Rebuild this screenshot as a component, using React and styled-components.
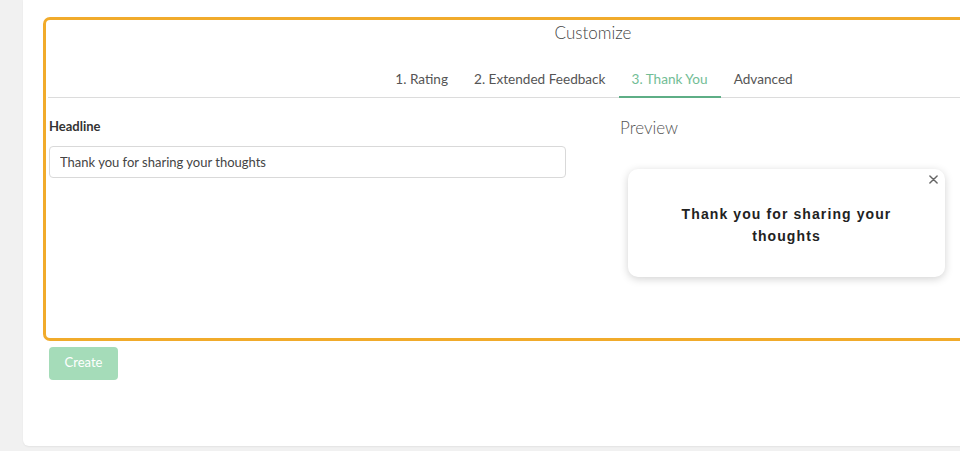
import React from 'react';
import styled, { createGlobalStyle } from 'styled-components';

const Global = createGlobalStyle`
	html, body {
		margin: 0;
		padding: 0;
		background: #f1f1f1;
	}
	#root {
		width: 960px;
		height: 451px;
		overflow: hidden;
	}
`;

const tabs = ['1. Rating', '2. Extended Feedback', '3. Thank You', 'Advanced'];

const App = () => {
	return (
		<Page>
			<Global />
			<Card>
				<Editor>
					<Heading>Customize</Heading>
					<TabBar>
						{tabs.map((t, i) => (
							<Tab key={t} $active={i === 2}>
								{t}
							</Tab>
						))}
					</TabBar>
					<Columns>
						<Left>
							<Label>Headline</Label>
							<Input defaultValue="Thank you for sharing your thoughts" />
						</Left>
						<Right>
							<PreviewTitle>Preview</PreviewTitle>
							<PreviewCard>
								<Close>
									<svg viewBox="0 0 10 10" width="9" height="9">
										<path
											d="M1 1 L9 9 M9 1 L1 9"
											stroke="#666"
											strokeWidth="1.6"
											strokeLinecap="round"
										/>
									</svg>
								</Close>
								<PreviewText>Thank you for sharing your thoughts</PreviewText>
							</PreviewCard>
						</Right>
					</Columns>
				</Editor>
				<CreateButton>Create</CreateButton>
			</Card>
		</Page>
	);
};

export default App;

const Page = styled.div`
	padding-left: 23px;
	height: 451px;
	box-sizing: border-box;
	font-family: Lato, 'Open Sans', sans-serif;
`;

const Card = styled.div`
	background: #ffffff;
	width: 1200px;
	height: 446px;
	border-radius: 0 0 0 6px;
	box-shadow: 0 1px 2px rgba(0, 0, 0, 0.06);
	padding: 17px 0 0 20px;
	box-sizing: border-box;
`;

const Editor = styled.div`
	width: 1100px;
	height: 324px;
	box-sizing: border-box;
	border: 3px solid #f1ab2b;
	border-radius: 7px;
	display: flex;
	flex-direction: column;
`;

const Heading = styled.div`
	text-align: center;
	font-size: 17px;
	font-weight: 300;
	color: #444;
	line-height: 24px;
	margin-top: 1px;
`;

const TabBar = styled.div`
	display: flex;
	justify-content: center;
	margin-top: 11px;
	margin-left: 2px;
	border-bottom: 1px solid #dcdcdc;
`;

const Tab = styled.div`
	padding: 14px 13px 8px;
	font-size: 13.6px;
	line-height: 18px;
	color: ${(p) => (p.$active ? '#72bd95' : '#555')};
	border-bottom: 2px solid ${(p) => (p.$active ? '#5eae86' : 'transparent')};
	margin-bottom: -1px;
`;

const Columns = styled.div`
	display: grid;
	grid-template-columns: 574px 1fr;
	padding-top: 19px;
`;

const Left = styled.div`
	padding-left: 3px;
	display: flex;
	flex-direction: column;
`;

const Label = styled.label`
	font-size: 13px;
	font-weight: 700;
	color: #333;
	line-height: 18px;
`;

const Input = styled.input`
	margin-top: 11px;
	width: 517px;
	height: 32px;
	box-sizing: border-box;
	border: 1px solid #d9d9d9;
	border-radius: 4px;
	padding: 0 10px;
	font-family: Lato, 'Open Sans', sans-serif;
	font-size: 13px;
	color: #444;
	outline: none;
`;

const Right = styled.div`
	display: flex;
	flex-direction: column;
`;

const PreviewTitle = styled.div`
	font-size: 17px;
	font-weight: 300;
	color: #555;
	line-height: 24px;
	margin-top: -1px;
`;

const PreviewCard = styled.div`
	position: relative;
	margin-top: 29px;
	margin-left: 8px;
	width: 317px;
	height: 108px;
	box-sizing: border-box;
	background: #fff;
	border-radius: 10px;
	box-shadow: 0 2px 8px rgba(0, 0, 0, 0.18);
	display: flex;
	align-items: center;
	justify-content: center;
	padding: 4px 40px 0;
`;

const Close = styled.div`
	position: absolute;
	top: 6px;
	right: 7px;
	line-height: 0;
`;

const PreviewText = styled.div`
	font-family: 'Liberation Sans', Arial, sans-serif;
	font-size: 14px;
	font-weight: 700;
	letter-spacing: 1.1px;
	line-height: 22px;
	color: #222;
	text-align: center;
`;

const CreateButton = styled.button`
	margin-top: 6px;
	margin-left: 6px;
	width: 69px;
	height: 33px;
	border: none;
	border-radius: 4px;
	background: #a5dcb9;
	color: #fff;
	font-family: Lato, 'Open Sans', sans-serif;
	font-size: 13px;
	padding: 0;
	padding-bottom: 4px;
`;
